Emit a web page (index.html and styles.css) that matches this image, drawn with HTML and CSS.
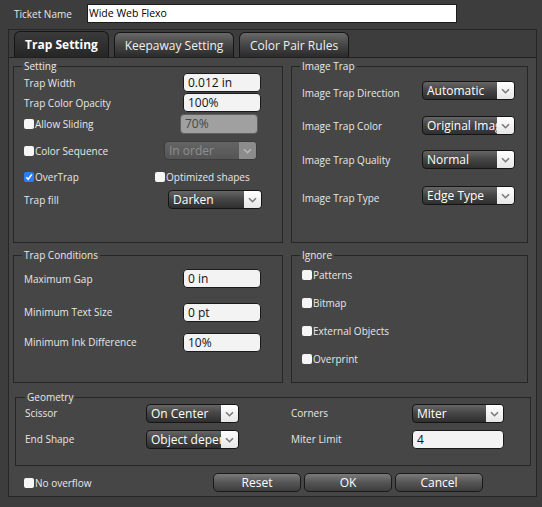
FILE: index.html
```html
<!DOCTYPE html>
<html>
<head>
<meta charset="utf-8">
<link rel="stylesheet" href="styles.css">
</head>
<body>
<div class="dialog">
  <div class="ticket-row">
    <span class="ticket-label">Ticket Name</span>
    <div class="ticket-input">Wide Web Flexo</div>
  </div>
  <div class="tabpane">
    <div class="tabs">
      <div class="tab active t1">Trap Setting</div>
      <div class="tab t2">Keepaway Setting</div>
      <div class="tab t3">Color Pair Rules</div>
    </div>
    <div class="tab-content">
      <div class="groups">
        <fieldset class="group g-top">
          <legend>Setting</legend>
          <div class="row h19 mt1"><span class="lbl w159">Trap Width</span><div class="field w78">0.012 in</div></div>
          <div class="row h19 mt1"><span class="lbl w159">Trap Color Opacity</span><div class="field w78">100%</div></div>
          <div class="row h20 mt2"><span class="chk w156"><span class="cb"></span>Allow Sliding</span><div class="field disabled w78">70%</div></div>
          <div class="row h19 mt7"><span class="chk w140"><span class="cb"></span>Color Sequence</span>
            <div class="select disabled w93"><span class="sel-text">In order</span><span class="sel-btn"><svg width="9" height="6" viewBox="0 0 9 6"><path d="M1 1.2 4.5 4.7 8 1.2"/></svg></span></div></div>
          <div class="row h14 mt10"><span class="chk w131"><span class="cb on"><svg width="10" height="10" viewBox="0 0 10 10"><path d="M2.3 5.2 4.2 7.3 7.8 2.4"/></svg></span>OverTrap</span><span class="chk"><span class="cb"></span>Optimized shapes</span></div>
          <div class="row h19 mt6"><span class="lbl w144">Trap fill</span>
            <div class="select w94"><span class="sel-text">Darken</span><span class="sel-btn"><svg width="9" height="6" viewBox="0 0 9 6"><path d="M1 1.2 4.5 4.7 8 1.2"/></svg></span></div></div>
        </fieldset>

        <fieldset class="group g-top">
          <legend>Image Trap</legend>
          <div class="row h19 mt9"><span class="lbl w120 low">Image Trap Direction</span>
            <div class="select w93"><span class="sel-text">Automatic</span><span class="sel-btn"><svg width="9" height="6" viewBox="0 0 9 6"><path d="M1 1.2 4.5 4.7 8 1.2"/></svg></span></div></div>
          <div class="row h19 mt16"><span class="lbl w120">Image Trap Color</span>
            <div class="select w93"><span class="sel-text">Original Image</span><span class="sel-btn"><svg width="9" height="6" viewBox="0 0 9 6"><path d="M1 1.2 4.5 4.7 8 1.2"/></svg></span></div></div>
          <div class="row h19 mt15"><span class="lbl w120">Image Trap Quality</span>
            <div class="select w93"><span class="sel-text">Normal</span><span class="sel-btn"><svg width="9" height="6" viewBox="0 0 9 6"><path d="M1 1.2 4.5 4.7 8 1.2"/></svg></span></div></div>
          <div class="row h19 mt17"><span class="lbl w120 low">Image Trap Type</span>
            <div class="select w93"><span class="sel-text">Edge Type</span><span class="sel-btn"><svg width="9" height="6" viewBox="0 0 9 6"><path d="M1 1.2 4.5 4.7 8 1.2"/></svg></span></div></div>
        </fieldset>

        <fieldset class="group g-bottom">
          <legend>Trap Conditions</legend>
          <div class="row h19 mt8"><span class="lbl w159">Maximum Gap</span><div class="field w78">0 in</div></div>
          <div class="row h19 mt15"><span class="lbl w159 high">Minimum Text Size</span><div class="field w78">0 pt</div></div>
          <div class="row h19 mt11"><span class="lbl w159 high">Minimum Ink Difference</span><div class="field w78">10%</div></div>
        </fieldset>

        <fieldset class="group g-bottom">
          <legend>Ignore</legend>
          <div class="row h14 mt7"><span class="chk"><span class="cb"></span>Patterns</span></div>
          <div class="row h14 mt14"><span class="chk"><span class="cb"></span>Bitmap</span></div>
          <div class="row h14 mt14"><span class="chk"><span class="cb"></span>External Objects</span></div>
          <div class="row h14 mt14"><span class="chk"><span class="cb"></span>Overprint</span></div>
        </fieldset>
      </div>

      <fieldset class="group geometry">
        <legend>Geometry</legend>
        <div class="geo-grid">
          <span class="lbl high">Scissor</span>
          <div class="select"><span class="sel-text">On Center</span><span class="sel-btn"><svg width="9" height="6" viewBox="0 0 9 6"><path d="M1 1.2 4.5 4.7 8 1.2"/></svg></span></div>
          <span></span>
          <span class="lbl high">Corners</span>
          <div class="select"><span class="sel-text">Miter</span><span class="sel-btn"><svg width="9" height="6" viewBox="0 0 9 6"><path d="M1 1.2 4.5 4.7 8 1.2"/></svg></span></div>
          <span class="lbl high">End Shape</span>
          <div class="select"><span class="sel-text">Object dependent</span><span class="sel-btn"><svg width="9" height="6" viewBox="0 0 9 6"><path d="M1 1.2 4.5 4.7 8 1.2"/></svg></span></div>
          <span></span>
          <span class="lbl high">Miter Limit</span>
          <div class="field">4</div>
        </div>
      </fieldset>

      <div class="footer">
        <span class="chk w189"><span class="cb"></span>No overflow</span>
        <div class="buttons">
          <div class="btn">Reset</div>
          <div class="btn">OK</div>
          <div class="btn">Cancel</div>
        </div>
      </div>
    </div>
  </div>
</div>
</body>
</html>
```

FILE: styles.css
```css
* { box-sizing: border-box; }

body {
  margin: 0;
  background: #3d3d3d;
  font-family: "Open Sans", "Liberation Sans", sans-serif;
  font-size: 10px;
  font-weight: 500;
  color: #e6e6e6;
}

.dialog {
  width: 542px;
  height: 507px;
  padding: 4px 5px 0 8px;
}

/* ticket name */
.ticket-row {
  display: flex;
  align-items: center;
  height: 19px;
}
.ticket-label {
  width: 79px;
  padding-left: 6px;
  color: #e6e6e6;
}
.ticket-input {
  width: 370px;
  height: 19px;
  background: #ffffff;
  border: 1px solid #1c1c1c;
  color: #000;
  font-size: 10.5px;
  line-height: 17px;
  padding-left: 1px;
}

/* tab pane */
.tabpane {
  margin-top: 6px;
  width: 529px;
  height: 468px;
  border: 1px solid #262626;
  display: flex;
  flex-direction: column;
}
.tabs {
  display: flex;
  align-items: flex-end;
  gap: 5px;
  height: 27px;
  padding-left: 5px;
  flex: none;
}
.tab {
  height: 25px;
  border: 1px solid #161616;
  border-bottom: none;
  border-radius: 6px 6px 0 0;
  display: flex;
  align-items: center;
  justify-content: center;
  font-size: 12px;
  color: #f0f0f0;
  background: linear-gradient(#686868, #464646 50%, #2a2a2a);
}
.tab.active {
  height: 26px;
  font-weight: bold;
  color: #ffffff;
  background: linear-gradient(#3a3a3a, #262626);
}
.t1 { width: 95px; }
.t2 { width: 120px; }
.t3 { width: 110px; }

.tab-content {
  flex: 1;
  border-top: 1px solid #202020;
  background: #464646;
  padding: 2px 8px 0 4px;
}

/* groups */
.groups {
  display: grid;
  grid-template-columns: 270px 237px;
  grid-template-rows: 183px 134px;
  column-gap: 8px;
  row-gap: 6px;
}
.group {
  margin: 0;
  min-width: 0;
  border: 1px solid #262626;
  padding: 0 6px 0 10px;
}
.group legend {
  font-size: 10px;
  line-height: 12px;
  padding: 0 2px;
  margin-left: -2px;
  color: #e8e8e8;
}
.g-top { height: 183px; }
.g-bottom { height: 134px; }

.geometry {
  margin: 8px 0 0 2px;
  width: 516px;
  height: 75px;
  padding-left: 9px;
}
.geometry legend { margin-left: 0; }
.geo-grid {
  display: grid;
  grid-template-columns: 121px 93px 52px 121px 92px;
  grid-template-rows: 19px 19px;
  row-gap: 7px;
  margin-top: 1px;
  align-items: center;
}

/* rows */
.row {
  display: flex;
  align-items: center;
}
.h14 { height: 14px; }
.h19 { height: 19px; }
.h20 { height: 20px; }
.mt1 { margin-top: 1px; }
.mt2 { margin-top: 2px; }
.mt6 { margin-top: 6px; }
.mt7 { margin-top: 7px; }
.mt8 { margin-top: 8px; }
.mt9 { margin-top: 9px; }
.mt10 { margin-top: 10px; }
.mt11 { margin-top: 11px; }
.mt14 { margin-top: 14px; }
.mt15 { margin-top: 15px; }
.mt16 { margin-top: 16px; }
.mt17 { margin-top: 17px; }

.lbl { flex: none; color: #e6e6e6; white-space: nowrap; }
.lbl.low { position: relative; top: 2px; }
.lbl.high { position: relative; top: -1px; }
.w120 { width: 120px; }
.w131 { width: 131px; }
.w140 { width: 140px; }
.w144 { width: 144px; }
.w156 { width: 156px; }
.w159 { width: 159px; }
.w189 { width: 189px; }
.w78 { width: 78px; }
.w93 { width: 93px; }
.w94 { width: 94px; }

/* checkbox */
.chk {
  display: flex;
  align-items: center;
  flex: none;
  white-space: nowrap;
  color: #e6e6e6;
}
.cb {
  width: 10px;
  height: 10px;
  border-radius: 2px;
  background: #f6f6f6;
  margin-right: 1px;
  flex: none;
  display: flex;
}
.cb.on { background: #2a7ef4; }
.cb svg path { fill: none; stroke: #ffffff; stroke-width: 1.5; }

/* text field */
.field {
  height: 19px;
  border: 1px solid #1a1a1a;
  border-radius: 4px;
  background: #f3f3f3;
  color: #111;
  font-size: 12px;
  line-height: 17px;
  padding-left: 4px;
  white-space: nowrap;
}
.field.disabled {
  background: #a0a0a0;
  border-color: #5e5e5e;
  color: #474747;
  height: 20px;
  line-height: 18px;
}

/* dropdown */
.select {
  display: flex;
  height: 19px;
  border: 1px solid #151515;
  border-radius: 4px;
  overflow: hidden;
  background: linear-gradient(#666666, #474747 45%, #2f2f2f);
  color: #ffffff;
  font-size: 12px;
}
.sel-text {
  flex: 1;
  min-width: 0;
  overflow: hidden;
  white-space: nowrap;
  padding-left: 4px;
  line-height: 17px;
}
.sel-btn {
  flex: none;
  width: 17px;
  background: linear-gradient(#ffffff, #e6e6e6);
  display: flex;
  align-items: center;
  justify-content: center;
}
.sel-btn svg path { fill: none; stroke: #7a7a7a; stroke-width: 1.6; }
.select.disabled {
  border-color: #3c3c3c;
  background: linear-gradient(#646464, #555555);
  color: #8e8e8e;
}
.select.disabled .sel-btn { background: #8c8c8c; }
.select.disabled .sel-btn svg path { stroke: #b8b8b8; }

/* footer */
.footer {
  display: flex;
  align-items: center;
  height: 19px;
  margin-top: 7px;
  padding-left: 11px;
}
.buttons {
  display: flex;
  gap: 3px;
}
.btn {
  width: 88px;
  height: 19px;
  border: 1px solid #1a1a1a;
  border-radius: 5px;
  background: linear-gradient(#7a7a7a, #555555 50%, #3d3d3d);
  color: #ffffff;
  font-size: 12px;
  display: flex;
  align-items: center;
  justify-content: center;
}
```
